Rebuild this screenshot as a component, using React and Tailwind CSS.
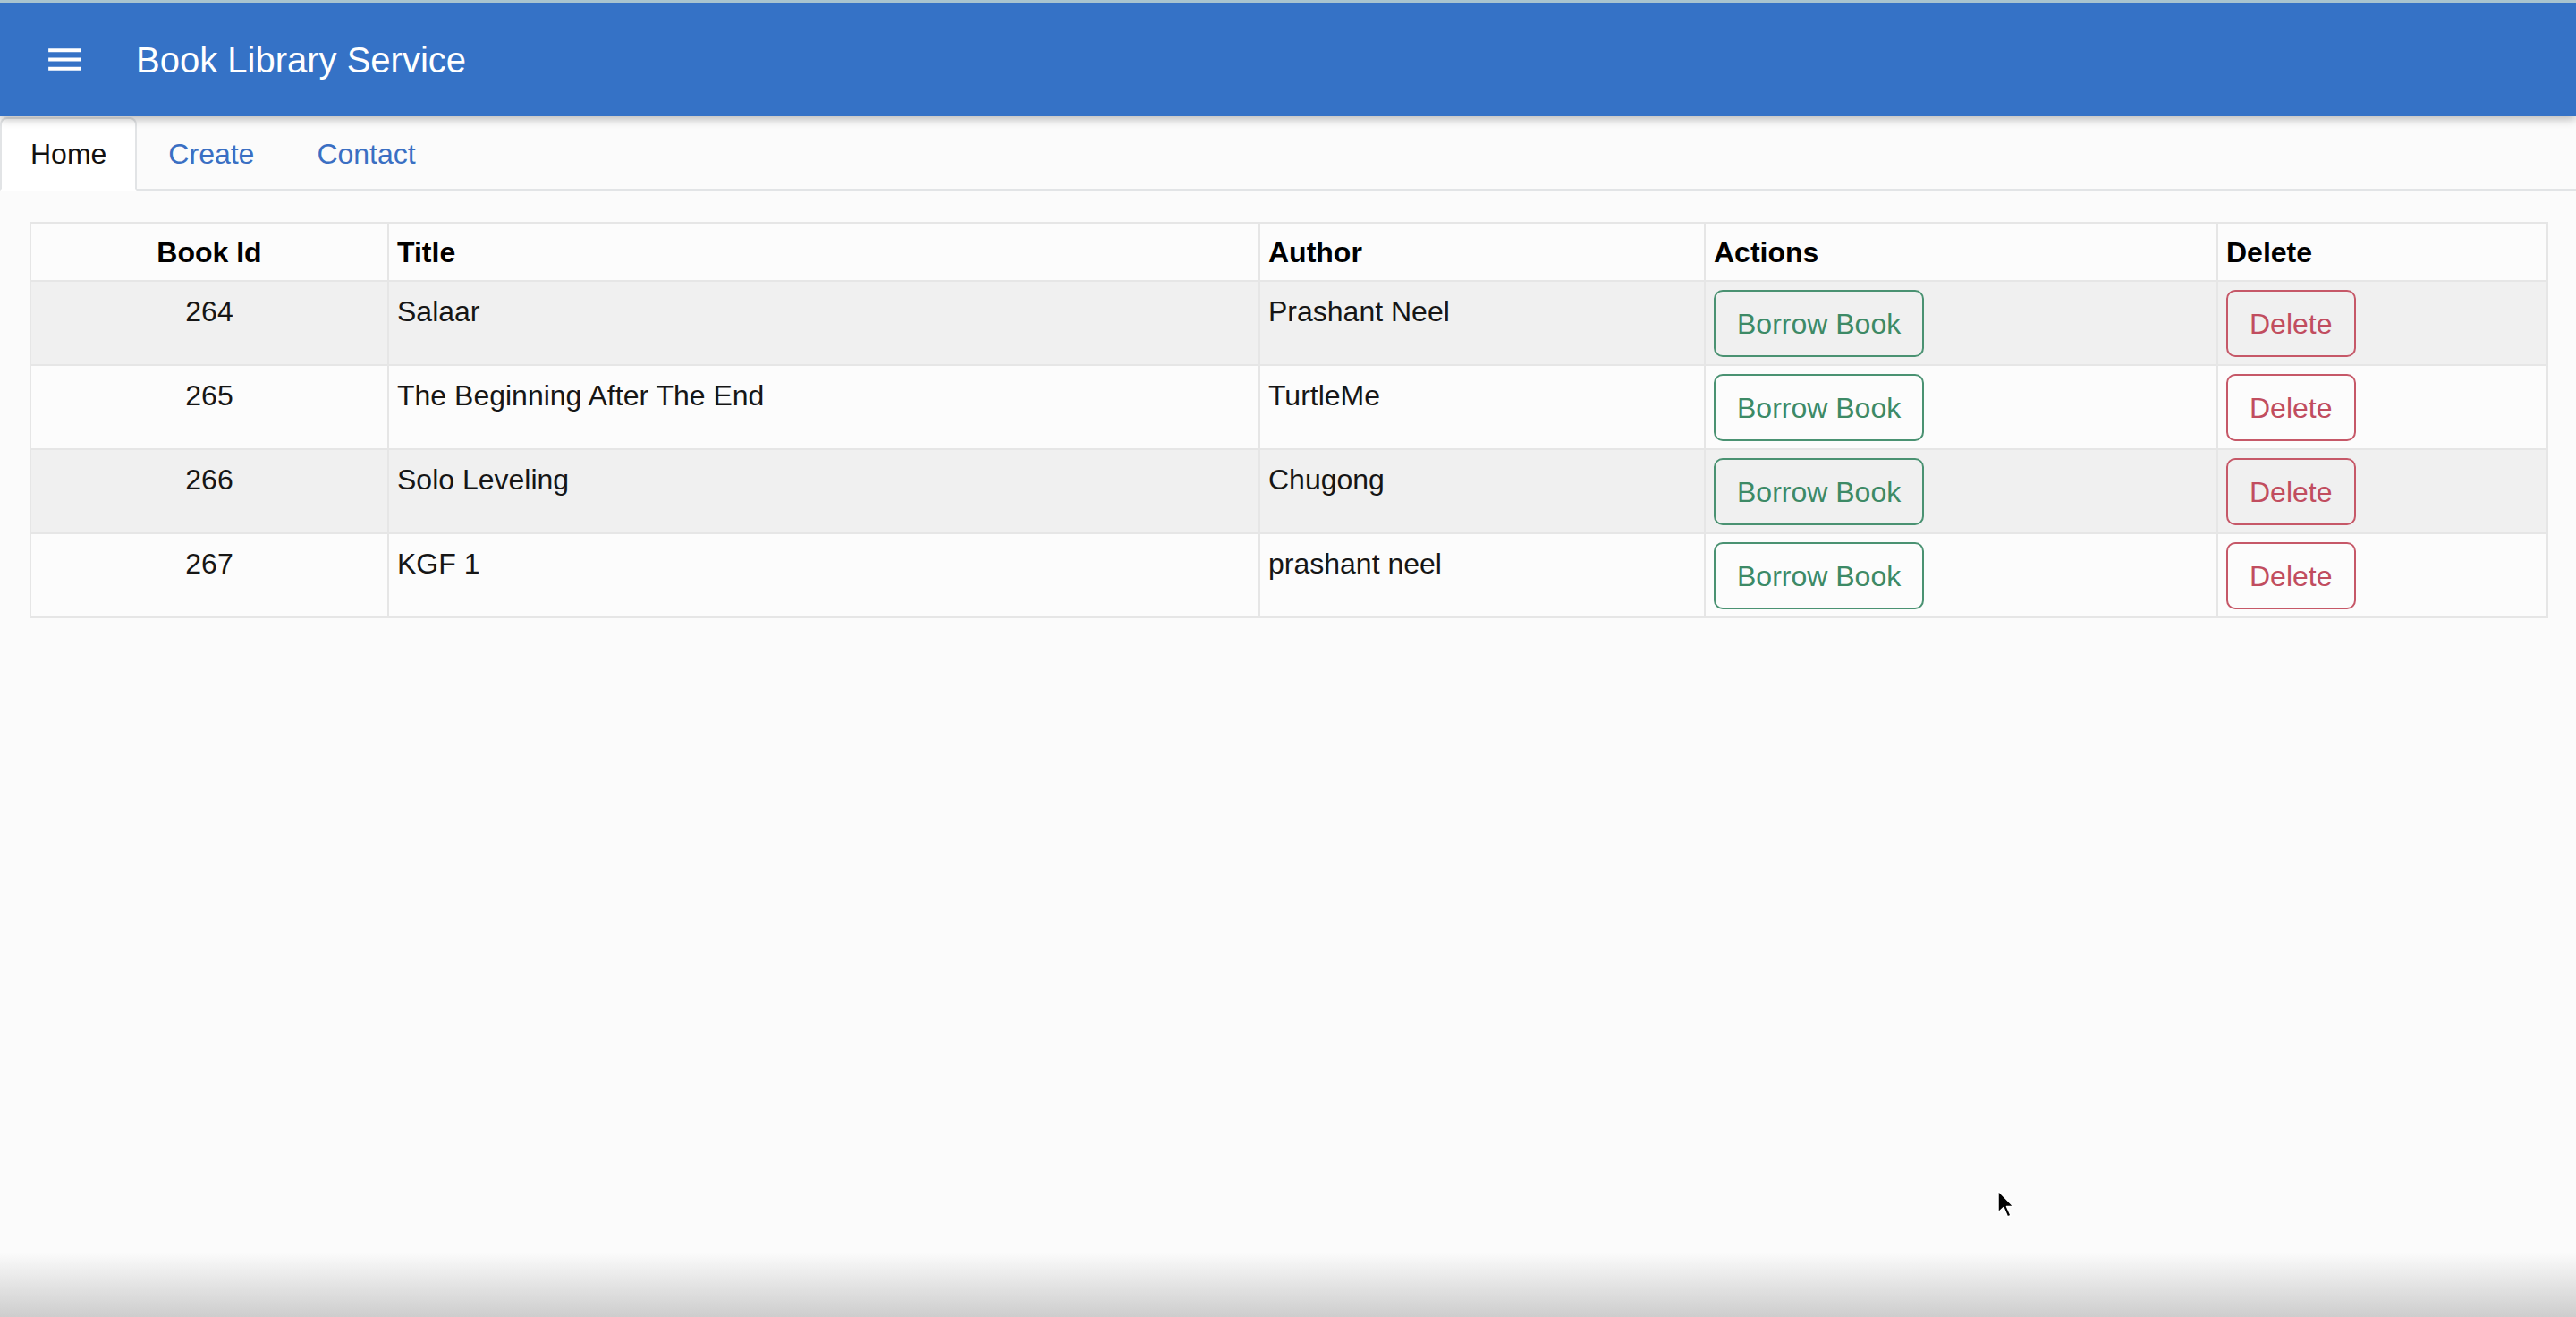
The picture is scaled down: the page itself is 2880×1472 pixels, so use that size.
import React from "react";

const rows = [
  { id: 264, title: "Salaar", author: "Prashant Neel" },
  { id: 265, title: "The Beginning After The End", author: "TurtleMe" },
  { id: 266, title: "Solo Leveling", author: "Chugong" },
  { id: 267, title: "KGF 1", author: "prashant neel" },
];

export default function App() {
  return (
    <div
      className="relative h-screen flex flex-col overflow-hidden bg-[#fbfbfb] text-[#161616]"
      style={{ fontFamily: '"Liberation Sans", Arial, Helvetica, sans-serif' }}
    >
      <header className="relative z-10 h-[130px] shrink-0 border-t-[3px] border-[#a9c4cf] bg-[#3572c6] flex items-center shadow-[0_3px_10px_rgba(0,0,0,0.28)]">
        <div className="ml-[48px] w-[49px] h-[49px] text-white">
          <svg viewBox="0 0 24 24" width="49" height="49" fill="currentColor">
            <path d="M3 18h18v-2H3v2zm0-5h18v-2H3v2zm0-7v2h18V6H3z" />
          </svg>
        </div>
        <div className="ml-[55px] text-[40px] leading-[48px] text-white">Book Library Service</div>
      </header>

      <nav className="flex items-end h-[83px] pt-[2px] border-b-2 border-[#e2e4e6] shrink-0">
        <div className="-mb-[2px] h-[82px] px-[32px] border-2 border-b-transparent border-[#e2e4e6] rounded-t-[8px] bg-white text-[32px] leading-[48px] py-[15px] text-[#111]">
          Home
        </div>
        <div className="-mb-[2px] h-[82px] px-[33px] border-2 border-transparent text-[32px] leading-[48px] py-[15px] text-[#3a6fc3]">
          Create
        </div>
        <div className="-mb-[2px] h-[82px] px-[33px] border-2 border-transparent text-[32px] leading-[48px] py-[15px] text-[#3a6fc3]">
          Contact
        </div>
      </nav>

      <main className="flex-1 px-[33px] pt-[35px]">
        <table className="w-full table-fixed border-collapse border-2 border-[#e6e6e6] text-[32px] leading-[48px]">
          <colgroup>
            <col className="w-[400px]" />
            <col className="w-[974px]" />
            <col className="w-[498px]" />
            <col className="w-[573px]" />
            <col className="w-[369px]" />
          </colgroup>
          <thead>
            <tr className="bg-[#fcfcfc]">
              <th className="border-2 border-[#e6e6e6] pt-[8px] pb-[7px] px-[9px] text-center font-bold text-black">Book Id</th>
              <th className="border-2 border-[#e6e6e6] pt-[8px] pb-[7px] px-[9px] text-left font-bold text-black">Title</th>
              <th className="border-2 border-[#e6e6e6] pt-[8px] pb-[7px] px-[9px] text-left font-bold text-black">Author</th>
              <th className="border-2 border-[#e6e6e6] pt-[8px] pb-[7px] px-[9px] text-left font-bold text-black">Actions</th>
              <th className="border-2 border-[#e6e6e6] pt-[8px] pb-[7px] px-[9px] text-left font-bold text-black">Delete</th>
            </tr>
          </thead>
          <tbody>
            {rows.map((r, i) => (
              <tr key={r.id} className={i % 2 === 0 ? "bg-[#f0f0f0]" : "bg-[#fcfcfc]"}>
                <td className="border-2 border-[#e6e6e6] pt-[9px] pb-[8px] px-[9px] align-top text-center">{r.id}</td>
                <td className="border-2 border-[#e6e6e6] pt-[9px] pb-[8px] px-[9px] align-top">{r.title}</td>
                <td className="border-2 border-[#e6e6e6] pt-[9px] pb-[8px] px-[9px] align-top">{r.author}</td>
                <td className="border-2 border-[#e6e6e6] pt-[9px] pb-[8px] px-[9px] align-top">
                  <button className="border-2 border-[#4a9272] rounded-[10px] px-[24px] pt-[12px] pb-[10px] leading-[49px] text-[#3d8a66] bg-transparent">
                    Borrow Book
                  </button>
                </td>
                <td className="border-2 border-[#e6e6e6] pt-[9px] pb-[8px] px-[9px] align-top">
                  <button className="border-2 border-[#c65868] rounded-[10px] px-[24px] pt-[12px] pb-[10px] leading-[49px] text-[#c14d5f] bg-transparent">
                    Delete
                  </button>
                </td>
              </tr>
            ))}
          </tbody>
        </table>
      </main>

      <div className="h-[72px] shrink-0 bg-gradient-to-b from-[#fbfbfb] to-[#cdcdcd]" />

      <svg
        className="absolute left-[2232px] top-[1330px]"
        width="22"
        height="32"
        viewBox="0 0 22 32"
      >
        <path d="M2 1 L2 25 L8 19.5 L12.5 30 L16 28.5 L11.5 18.5 L19 18.5 Z" fill="#000" stroke="#fff" strokeWidth="1.5" strokeLinejoin="round" />
      </svg>
    </div>
  );
}
